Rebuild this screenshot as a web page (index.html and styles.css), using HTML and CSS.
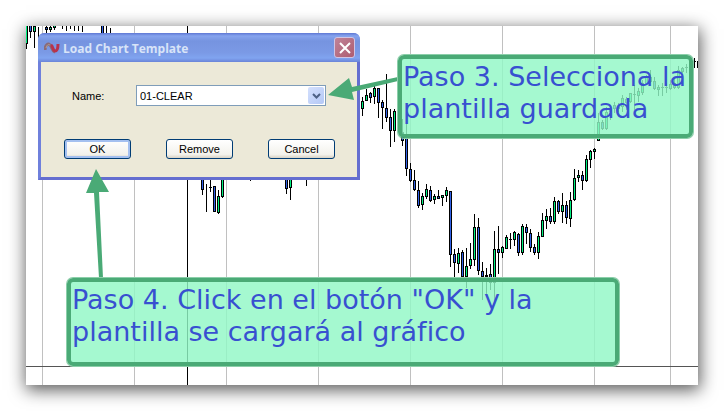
FILE: index.html
```html
<!DOCTYPE html>
<html lang="es">
<head>
  <meta charset="UTF-8">
  <title>Load Chart Template</title>
  <link rel="stylesheet" href="styles.css">
</head>
<body>
  <main class="stage">
    <svg class="chart" viewBox="26 26 672 359" aria-hidden="true">
      <g class="grid" shape-rendering="crispEdges">
        <path d="M42 26h1v359h-1zM134 26h1v359h-1zM226 26h1v359h-1zM318 26h1v359h-1zM410 26h1v359h-1zM502 26h1v359h-1zM594 26h1v359h-1zM670 26h1v359h-1z" fill="#c0c0c0"/>
        <path d="M187 26h1v359h-1z" fill="#000"/>
        <path d="M26 366h672v1H26z" fill="#555"/>
      </g>
      <g id="candles" shape-rendering="crispEdges"></g>
    </svg>

    <form class="dialog" onsubmit="event.preventDefault();">
      <header class="titlebar">
        <svg class="logo" viewBox="0 0 16 12" width="16" height="12" aria-hidden="true">
          <path d="M1 8C1 3 4 1 6 3s2 6 5 7" fill="none" stroke="#8a6a78" stroke-width="3"/>
          <path d="M7 3c2 1 2 6 4 6s3-3 3-7" fill="none" stroke="#b8324c" stroke-width="3"/>
          <path d="M2 6c1-3 2-4 4-3" fill="none" stroke="#b5a394" stroke-width="1"/>
        </svg>
        <h1>Load Chart Template</h1>
        <button class="close" type="button" aria-label="Close">
          <svg viewBox="0 0 12 12" width="12" height="12"><path d="M1 1l10 10M11 1L1 11" stroke="#fff" stroke-width="2"/></svg>
        </button>
      </header>
      <div class="field">
        <label for="template">Name:</label>
        <div class="combo">
          <select id="template">
            <option>01-CLEAR</option>
          </select>
          <span class="drop">
            <svg viewBox="0 0 9 6" width="9" height="6"><path d="M1 1l3.5 3.5L8 1" fill="none" stroke="#4d6185" stroke-width="2"/></svg>
          </span>
        </div>
      </div>
      <div class="buttons">
        <button class="btn default" type="submit">OK</button>
        <button class="btn" type="button">Remove</button>
        <button class="btn" type="button">Cancel</button>
      </div>
    </form>

    <svg class="arrows" viewBox="26 26 672 359" aria-hidden="true">
      <g fill="#4aaa76">
        <path d="M398 77L352 87 349 78 328 95 354 100 352 92 398 81z"/>
        <path d="M99 278L94 193 86 193 96 169 109 192 99 192 103 278z"/>
      </g>
    </svg>

    <p class="callout step3">Paso 3. Selecciona la<br>plantilla guardada</p>
    <p class="callout step4">Paso 4. Click en el botón "OK" y la<br>plantilla se cargará al gráfico</p>
  </main>
  <script src="chart.js"></script>
</body>
</html>
```
FILE: styles.css
```css
* { box-sizing: border-box; }
body {
  margin: 0;
  padding: 26px;
  background: #fff;
  font-family: "Liberation Sans", Arial, sans-serif;
  font-size: 11px;
}
.stage {
  position: relative;
  background: #fff;
  box-shadow: 1px 4px 16px 1px rgba(0, 0, 0, 0.65);
}
.chart { display: block; width: 100%; height: auto; }
.arrows { position: absolute; left: 0; top: 0; width: 100%; height: auto; }

.dialog {
  position: absolute;
  left: 12px;
  top: 7px;
  width: 322px;
  padding-bottom: 18px;
  background: #ece9d8;
  border: 3px solid #6f80dc;
  border-right-color: #646ed0;
  border-bottom-color: #646ed0;
  border-top: 0;
  border-radius: 7px 7px 0 0;
}
.titlebar {
  display: flex;
  align-items: center;
  gap: 3px;
  height: 29px;
  margin: 0 -3px;
  padding: 0 5px 0 6px;
  border-radius: 6px 6px 0 0;
  background: linear-gradient(#5f78d4 0, #86a4ee 3px, #7694e0 8px, #7b9ae6 20px, #80a4f0 25px, #6a84d8 29px);
}
.titlebar h1 {
  flex: 1;
  margin: 0;
  padding-top: 2px;
  font: 700 12px/18px "Open Sans", sans-serif;
  color: #d8e4f8;
}
.close {
  display: flex;
  align-items: center;
  justify-content: center;
  width: 21px;
  height: 21px;
  padding: 0;
  border: 1px solid #d0c4e4;
  border-radius: 3px;
  background: linear-gradient(135deg, #c08398, #ae5c70);
}
.field {
  display: flex;
  align-items: center;
  padding: 23px 31px 0;
}
.field label { width: 64px; }
.combo { position: relative; flex: 1; }
.combo select {
  display: block;
  width: 100%;
  height: 21px;
  padding: 0 3px;
  appearance: none;
  border: 1px solid #7f9db9;
  border-radius: 0;
  background: #fff;
  color: #000;
  font: inherit;
}
.drop {
  position: absolute;
  top: 2px;
  right: 2px;
  display: flex;
  align-items: center;
  justify-content: center;
  width: 16px;
  height: 17px;
  border-radius: 2px;
  background: linear-gradient(135deg, #d4e0fd, #b4c8f6);
  pointer-events: none;
}
.buttons {
  display: flex;
  gap: 35px;
  padding: 33px 22px 0 23px;
}
.btn {
  flex: 1;
  height: 20px;
  padding: 0;
  border: 1px solid #003c74;
  border-radius: 3px;
  background: linear-gradient(#fff, #f3f2ec 80%, #d8d2c4);
  color: #000;
  font: inherit;
}
.btn.default { box-shadow: inset 0 0 0 2px #a4c0f0; }

.callout {
  position: absolute;
  margin: 0;
  padding: 2px 1px;
  border: 4px solid #4aaa76;
  border-radius: 6px;
  box-shadow: 0 0 0 1px #8ccfaa;
  background: rgba(145, 248, 198, 0.82);
  color: #3850d0;
  font: 27px/32px Verdana, "DejaVu Sans", sans-serif;
  white-space: nowrap;
}
.step3 { left: 372px; top: 29px; width: 295px; height: 83px; }
.step4 { left: 41px; top: 252px; width: 552px; height: 88px; }
```
FILE: chart.js
```js
// x, high, low, body top, body bottom, colour (g = up, b = down, k = doji)
const candles = [
  [26,26,49,25,44,'g'],[30,26,38,25,32,'b'],[34,26,48,26,32,'g'],[38,27,38,26,26,'k'],
  [46,26,35,27,30,'b'],[50,26,32,27,30,'g'],[54,26,30,25,28,'g'],[62,26,29,26,26,'k'],
  [66,26,31,26,26,'k'],[70,26,29,26,26,'k'],[74,26,31,26,26,'k'],[78,26,31,26,26,'k'],
  [82,26,32,26,26,'k'],[102,26,33,25,34,'b'],[106,26,33,26,26,'k'],[110,28,33,28,28,'k'],
  [202,178,195,176,190,'b'],[206,184,212,189,189,'k'],[210,178,192,187,188,'k'],
  [214,186,212,186,212,'b'],[218,190,214,196,213,'g'],[222,178,198,176,197,'g'],
  [250,178,181,178,178,'k'],[254,178,180,178,178,'k'],[282,178,180,178,178,'k'],
  [286,178,194,176,189,'b'],[290,178,200,176,188,'g'],[306,178,186,178,178,'k'],
  [362,97,116,101,109,'g'],[366,89,101,95,101,'g'],[370,92,103,93,98,'b'],[374,86,104,88,97,'g'],
  [378,88,118,88,103,'b'],[382,100,129,102,108,'b'],[386,74,122,108,118,'b'],[390,109,147,117,131,'b'],
  [394,109,142,111,131,'g'],[402,119,146,132,141,'b'],[406,113,176,138,169,'b'],[410,163,182,169,181,'b'],
  [414,170,191,180,190,'b'],[418,181,208,190,206,'b'],[422,193,210,196,205,'g'],[426,184,199,189,197,'g'],
  [430,186,202,190,201,'b'],[434,194,204,196,200,'g'],[438,190,199,196,199,'b'],[442,195,206,195,198,'g'],
  [446,187,202,190,196,'g'],[450,191,267,191,255,'b'],[454,249,277,254,263,'b'],[458,248,273,253,264,'g'],
  [462,250,278,252,277,'b'],[466,248,288,266,277,'g'],[470,243,269,259,266,'g'],[474,214,266,227,260,'g'],
  [478,218,275,227,271,'b'],[482,262,300,271,277,'b'],[486,268,294,275,277,'b'],[490,264,290,274,283,'b'],
  [494,231,304,249,283,'g'],[498,226,274,249,253,'b'],[502,246,258,247,253,'g'],[506,235,249,237,249,'g'],
  [510,233,249,239,240,'k'],[514,231,246,232,240,'g'],[518,233,256,234,253,'b'],[522,224,255,226,253,'g'],
  [526,224,244,227,233,'b'],[530,229,252,233,248,'b'],[534,244,255,247,253,'b'],[538,232,259,236,253,'g'],
  [542,213,237,220,237,'g'],[546,209,229,216,221,'g'],[550,208,224,216,222,'b'],[554,197,224,201,222,'g'],
  [558,200,214,201,212,'b'],[562,193,223,205,212,'g'],[566,201,224,205,218,'b'],[570,192,227,200,219,'g'],
  [574,169,201,178,200,'g'],[578,170,182,175,178,'g'],[582,171,190,175,181,'b'],[586,155,182,159,181,'g'],
  [590,150,168,151,160,'g'],[594,148,159,149,152,'g'],[598,113,141,122,141,'g'],[602,120,130,122,129,'b'],
  [606,107,130,112,129,'g'],[610,105,120,109,112,'g'],[614,102,113,105,109,'b'],[618,103,112,107,109,'g'],
  [622,95,112,98,107,'g'],[626,97,110,99,103,'b'],[630,93,103,93,102,'g'],[634,85,110,94,95,'k'],
  [638,88,102,91,96,'g'],[642,80,95,83,93,'g'],[646,75,85,76,84,'g'],[650,70,83,77,82,'g'],
  [654,77,90,81,89,'b'],[658,85,96,87,90,'g'],[662,83,96,87,88,'k'],[666,83,93,87,88,'k'],
  [670,80,90,84,89,'g'],[674,78,89,83,88,'b'],[678,66,89,70,88,'g'],[682,67,73,68,72,'g'],
  [686,64,73,67,68,'k'],[690,58,68,60,67,'g'],[694,58,68,61,62,'k'],[697,61,68,61,61,'k']
];
const colors = { g: '#00f080', b: '#3060e8', k: '#000' };

function bar(x, y, w, h, fill) {
  return `<rect x="${x}" y="${y}" width="${w}" height="${h}" fill="${fill}"/>`;
}

document.getElementById('candles').innerHTML = candles.map(([x, hi, lo, top, bottom, c]) => {
  let out = bar(x, hi, 1, lo - hi, '#000');
  if (bottom > top) out += bar(x - 1, top, 3, bottom - top, '#000');
  if (c !== 'k' && bottom - top > 2) out += bar(x, top + 1, 1, bottom - top - 2, colors[c]);
  return out;
}).join('');
```
